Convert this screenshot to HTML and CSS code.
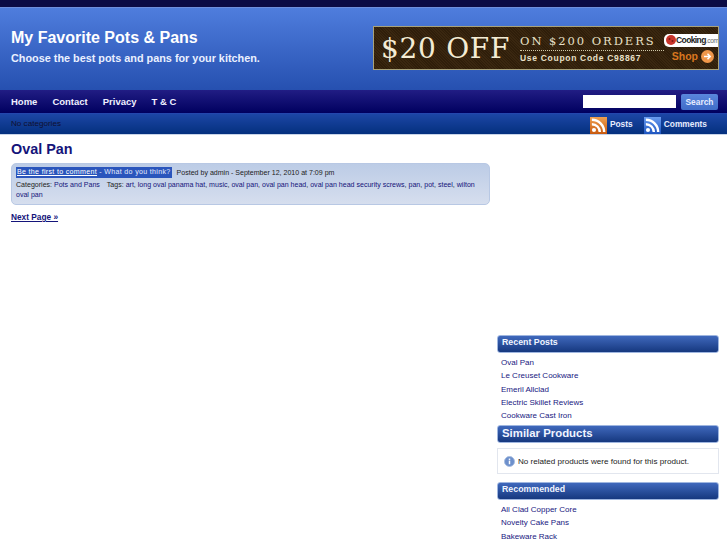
FILE: index.html
```html
<!DOCTYPE html>
<html lang="en">
<head>
<meta charset="utf-8">
<title>My Favorite Pots &amp; Pans</title>
<link rel="stylesheet" href="styles.css">
</head>
<body>
<div class="topbar"></div>
<header class="header">
  <div class="brand">
    <h1 class="site-title">My Favorite Pots &amp; Pans</h1>
    <p class="tagline">Choose the best pots and pans for your kitchen.</p>
  </div>
  <div class="banner">
    <span class="banner-big">$20 OFF</span>
    <div class="banner-mid">
      <span class="banner-on">ON $200 ORDERS</span>
      <span class="banner-code">Use Coupon Code C98867</span>
    </div>
    <div class="banner-right">
      <span class="banner-logo"><svg class="logo-dot" width="10" height="10" viewBox="0 0 10 10"><circle cx="5" cy="5" r="5" fill="#c8352b"/><circle cx="3.5" cy="4" r="1" fill="#7a1a14"/><circle cx="6.5" cy="6" r="1" fill="#7a1a14"/></svg><b>Cooking</b><i>.com</i></span>
      <span class="banner-shop">Shop<svg width="13" height="13" viewBox="0 0 13 13"><circle cx="6.5" cy="6.5" r="6.5" fill="#f0974a"/><path d="M3 6.5h6M6.5 3.8l2.7 2.7-2.7 2.7" fill="none" stroke="#fff" stroke-width="1.5"/></svg></span>
    </div>
  </div>
</header>
<nav class="nav">
  <ul class="nav-links">
    <li><a href="#">Home</a></li>
    <li><a href="#">Contact</a></li>
    <li><a href="#">Privacy</a></li>
    <li><a href="#">T &amp; C</a></li>
  </ul>
  <form class="search">
    <input class="search-input" type="text" aria-label="Search">
    <button class="search-btn" type="button">Search</button>
  </form>
</nav>
<div class="subnav">
  <span class="no-cats">No categories</span>
  <div class="feeds">
    <a class="feed" href="#"><svg class="rss" viewBox="0 0 18 18"><defs><linearGradient id="og" x1="0" y1="0" x2="0" y2="1"><stop offset="0" stop-color="#f0a050"/><stop offset="1" stop-color="#c85a10"/></linearGradient></defs><rect width="18" height="18" fill="url(#og)"/><circle cx="4.2" cy="13.8" r="2.2" fill="#fff"/><path d="M2 7.6a8.4 8.4 0 0 1 8.4 8.4M2 3a13 13 0 0 1 13 13" fill="none" stroke="#fff" stroke-width="2.6"/></svg>Posts</a>
    <a class="feed" href="#"><svg class="rss" viewBox="0 0 18 18"><defs><linearGradient id="bg" x1="0" y1="0" x2="0" y2="1"><stop offset="0" stop-color="#6a9cf0"/><stop offset="1" stop-color="#1d55c0"/></linearGradient></defs><rect width="18" height="18" fill="url(#bg)"/><circle cx="4.2" cy="13.8" r="2.2" fill="#fff"/><path d="M2 7.6a8.4 8.4 0 0 1 8.4 8.4M2 3a13 13 0 0 1 13 13" fill="none" stroke="#fff" stroke-width="2.6"/></svg>Comments</a>
  </div>
</div>
<div class="layout">
  <main class="content">
    <h2 class="post-title"><a href="#">Oval Pan</a></h2>
    <div class="meta">
      <div class="meta-line"><span class="comment-badge"><a href="#">Be the first to comment</a> - What do you think?</span><span class="posted">Posted by admin - September 12, 2010 at 7:09 pm</span></div>
      <div class="meta-tags">Categories: <a href="#">Pots and Pans</a> <span class="tags-label">Tags:</span> <a href="#">art</a>, <a href="#">long oval panama hat</a>, <a href="#">music</a>, <a href="#">oval pan</a>, <a href="#">oval pan head</a>, <a href="#">oval pan head security screws</a>, <a href="#">pan</a>, <a href="#">pot</a>, <a href="#">steel</a>, <a href="#">wilton</a> <a href="#">oval pan</a></div>
    </div>
    <a class="next" href="#">Next Page »</a>
  </main>
  <aside class="sidebar">
    <h3 class="widget-title">Recent Posts</h3>
    <ul class="widget-list">
      <li><a href="#">Oval Pan</a></li>
      <li><a href="#">Le Creuset Cookware</a></li>
      <li><a href="#">Emeril Allclad</a></li>
      <li><a href="#">Electric Skillet Reviews</a></li>
      <li><a href="#">Cookware Cast Iron</a></li>
    </ul>
    <h3 class="widget-title widget-title-large">Similar Products</h3>
    <div class="notice"><svg class="info" viewBox="0 0 12 12"><circle cx="6" cy="6" r="5.5" fill="#6d90cc" stroke="#a9bde0"/><rect x="5.2" y="5" width="1.6" height="4" fill="#fff"/><rect x="5.2" y="2.8" width="1.6" height="1.5" fill="#fff"/></svg>No related products were found for this product.</div>
    <h3 class="widget-title">Recommended</h3>
    <ul class="widget-list">
      <li><a href="#">All Clad Copper Core</a></li>
      <li><a href="#">Novelty Cake Pans</a></li>
      <li><a href="#">Bakeware Rack</a></li>
    </ul>
  </aside>
</div>
</body>
</html>
```
FILE: styles.css
```css
* { box-sizing: border-box; }
html, body { margin: 0; padding: 0; height: 545px; overflow: hidden; }
body { background: #fff; font-family: "Liberation Sans", Arial, sans-serif; font-size: 8px; color: #222; }
a { color: #14147a; text-decoration: none; }
h1, h2, h3, p, ul { margin: 0; padding: 0; }
ul { list-style: none; }

.topbar { height: 7px; background: #0b0b45; }
.header { height: 83px; border-top: 1px solid #6f8fdc; background: linear-gradient(#4f7ddd, #2650b0); display: flex; justify-content: space-between; padding: 18px 8px 0 11px; }
.brand { padding-top: 1px; }
.site-title { font-size: 16px; line-height: 22px; color: #fff; font-weight: bold; }
.tagline { font-size: 10.85px; line-height: 14px; margin-top: 2px; font-weight: bold; color: #eaf0ff; }

.banner { width: 346px; height: 44px; background: repeating-linear-gradient(45deg, #3a2710 0 1px, #2f1e0a 1px 2px); border: 1px solid #a8a27a; display: flex; align-items: center; padding: 0 0 0 7px; overflow: hidden; flex: none; }
.banner-big { font-family: "DejaVu Serif", serif; font-size: 28px; color: #f4ecd4; width: 139px; white-space: nowrap; letter-spacing: .7px; flex: none; }
.banner-mid { display: flex; flex-direction: column; width: 144px; flex: none; }
.banner-on { font-family: "DejaVu Serif", serif; font-size: 11.5px; letter-spacing: 1.95px; color: #e8e0c8; white-space: nowrap; border-bottom: 1px dotted #cfc8a8; padding-bottom: 2px; }
.banner-code { font-size: 8.5px; font-weight: bold; letter-spacing: .7px; color: #e8e0c8; white-space: nowrap; margin-top: 2px; }
.banner-right { display: flex; flex-direction: column; align-items: flex-end; gap: 3px; flex: 1; min-width: 0; }
.banner-logo { display: flex; align-items: center; background: #fff; border-radius: 5px 0 0 5px; width: 54px; height: 13px; padding-left: 2px; font-size: 8.5px; color: #222; letter-spacing: -.6px; white-space: nowrap; }
.logo-dot { flex: none; }
.banner-logo i { font-style: normal; font-size: 6.5px; letter-spacing: -.3px; color: #666; }
.banner-shop { display: flex; align-items: center; gap: 3px; color: #d9761f; font-size: 10.5px; font-weight: bold; padding-right: 4px; }

.nav { height: 23px; background: linear-gradient(#211d84, #00005f); display: flex; justify-content: space-between; align-items: center; padding: 0 9px 0 11px; }
.nav-links { display: flex; gap: 15px; }
.nav-links a { color: #f0f0ff; font-size: 9.5px; font-weight: bold; }
.search { display: flex; gap: 5px; align-items: center; }
.search-input { width: 93px; height: 13px; border: 0; background: #fff; padding: 0; }
.search-btn { width: 37px; height: 16px; border: 0; border-radius: 2px; background: linear-gradient(#5a86dc, #3f6cc8); color: #e6ecff; font: bold 8.4px "Liberation Sans", Arial, sans-serif; padding: 0; }

.subnav { height: 21px; border-top: 1px solid #2346ae; background: linear-gradient(#1c46a6, #04307e); display: flex; justify-content: space-between; align-items: center; padding: 0 20px 1px 11px; }
.no-cats { color: #101030; font-size: 8.1px; }
.feeds { display: flex; gap: 11px; align-items: center; }
.feed { display: flex; align-items: center; gap: 3px; color: #e6ecff; font-size: 8.4px; font-weight: bold; }
.rss { width: 17px; height: 17px; margin-top: 3px; }

.layout { display: flex; padding-left: 11px; border-top: 1px solid #c8d4e8; }
.content { width: 479px; flex: none; }
.post-title { font-size: 14.4px; line-height: 18px; margin-top: 5px; }
.post-title a { color: #14147a; }
.meta { margin-top: 5px; height: 42px; background: linear-gradient(#bccce6, #d6deee); border: 1px solid #b8c8e4; border-radius: 5px; padding: 3px 4px 0 4px; font-size: 7.05px; }
.meta-line { display: flex; align-items: center; gap: 5px; }
.comment-badge { background: #2a55bc; color: #e6ecff; padding: 0 1px 1px; line-height: 10px; letter-spacing: .33px; }
.comment-badge a { color: #fff; text-decoration: underline; }
.posted { color: #222; white-space: nowrap; }
.meta-tags { margin-top: 2px; line-height: 10px; color: #222; }
.tags-label { margin-left: 5px; }
.next { display: inline-block; margin-top: 7px; font-size: 8.3px; font-weight: bold; color: #14147a; text-decoration: underline; }

.sidebar { margin-left: 7px; width: 222px; flex: none; padding-top: 200px; }
.widget-title { height: 18px; background: linear-gradient(#3f68bc, #16387f); border: 1px solid #9fb6e0; border-radius: 3px; color: #f0f4ff; font-size: 8.8px; line-height: 13px; padding-left: 4px; font-weight: bold; }
.widget-title-large { font-size: 11.4px; line-height: 14px; }
.widget-list { padding: 3px 0 0 4px; margin-bottom: 3px; }
.widget-list li { height: 13.3px; line-height: 13.3px; font-size: 8px; }
.widget-list a { color: #20207f; }
.notice { margin: 5px 0 7.5px; height: 26px; border: 1px solid #e2e6ee; display: flex; align-items: center; padding-left: 6px; gap: 3px; font-size: 8.1px; color: #222; }
.info { width: 11px; height: 11px; flex: none; }
```
